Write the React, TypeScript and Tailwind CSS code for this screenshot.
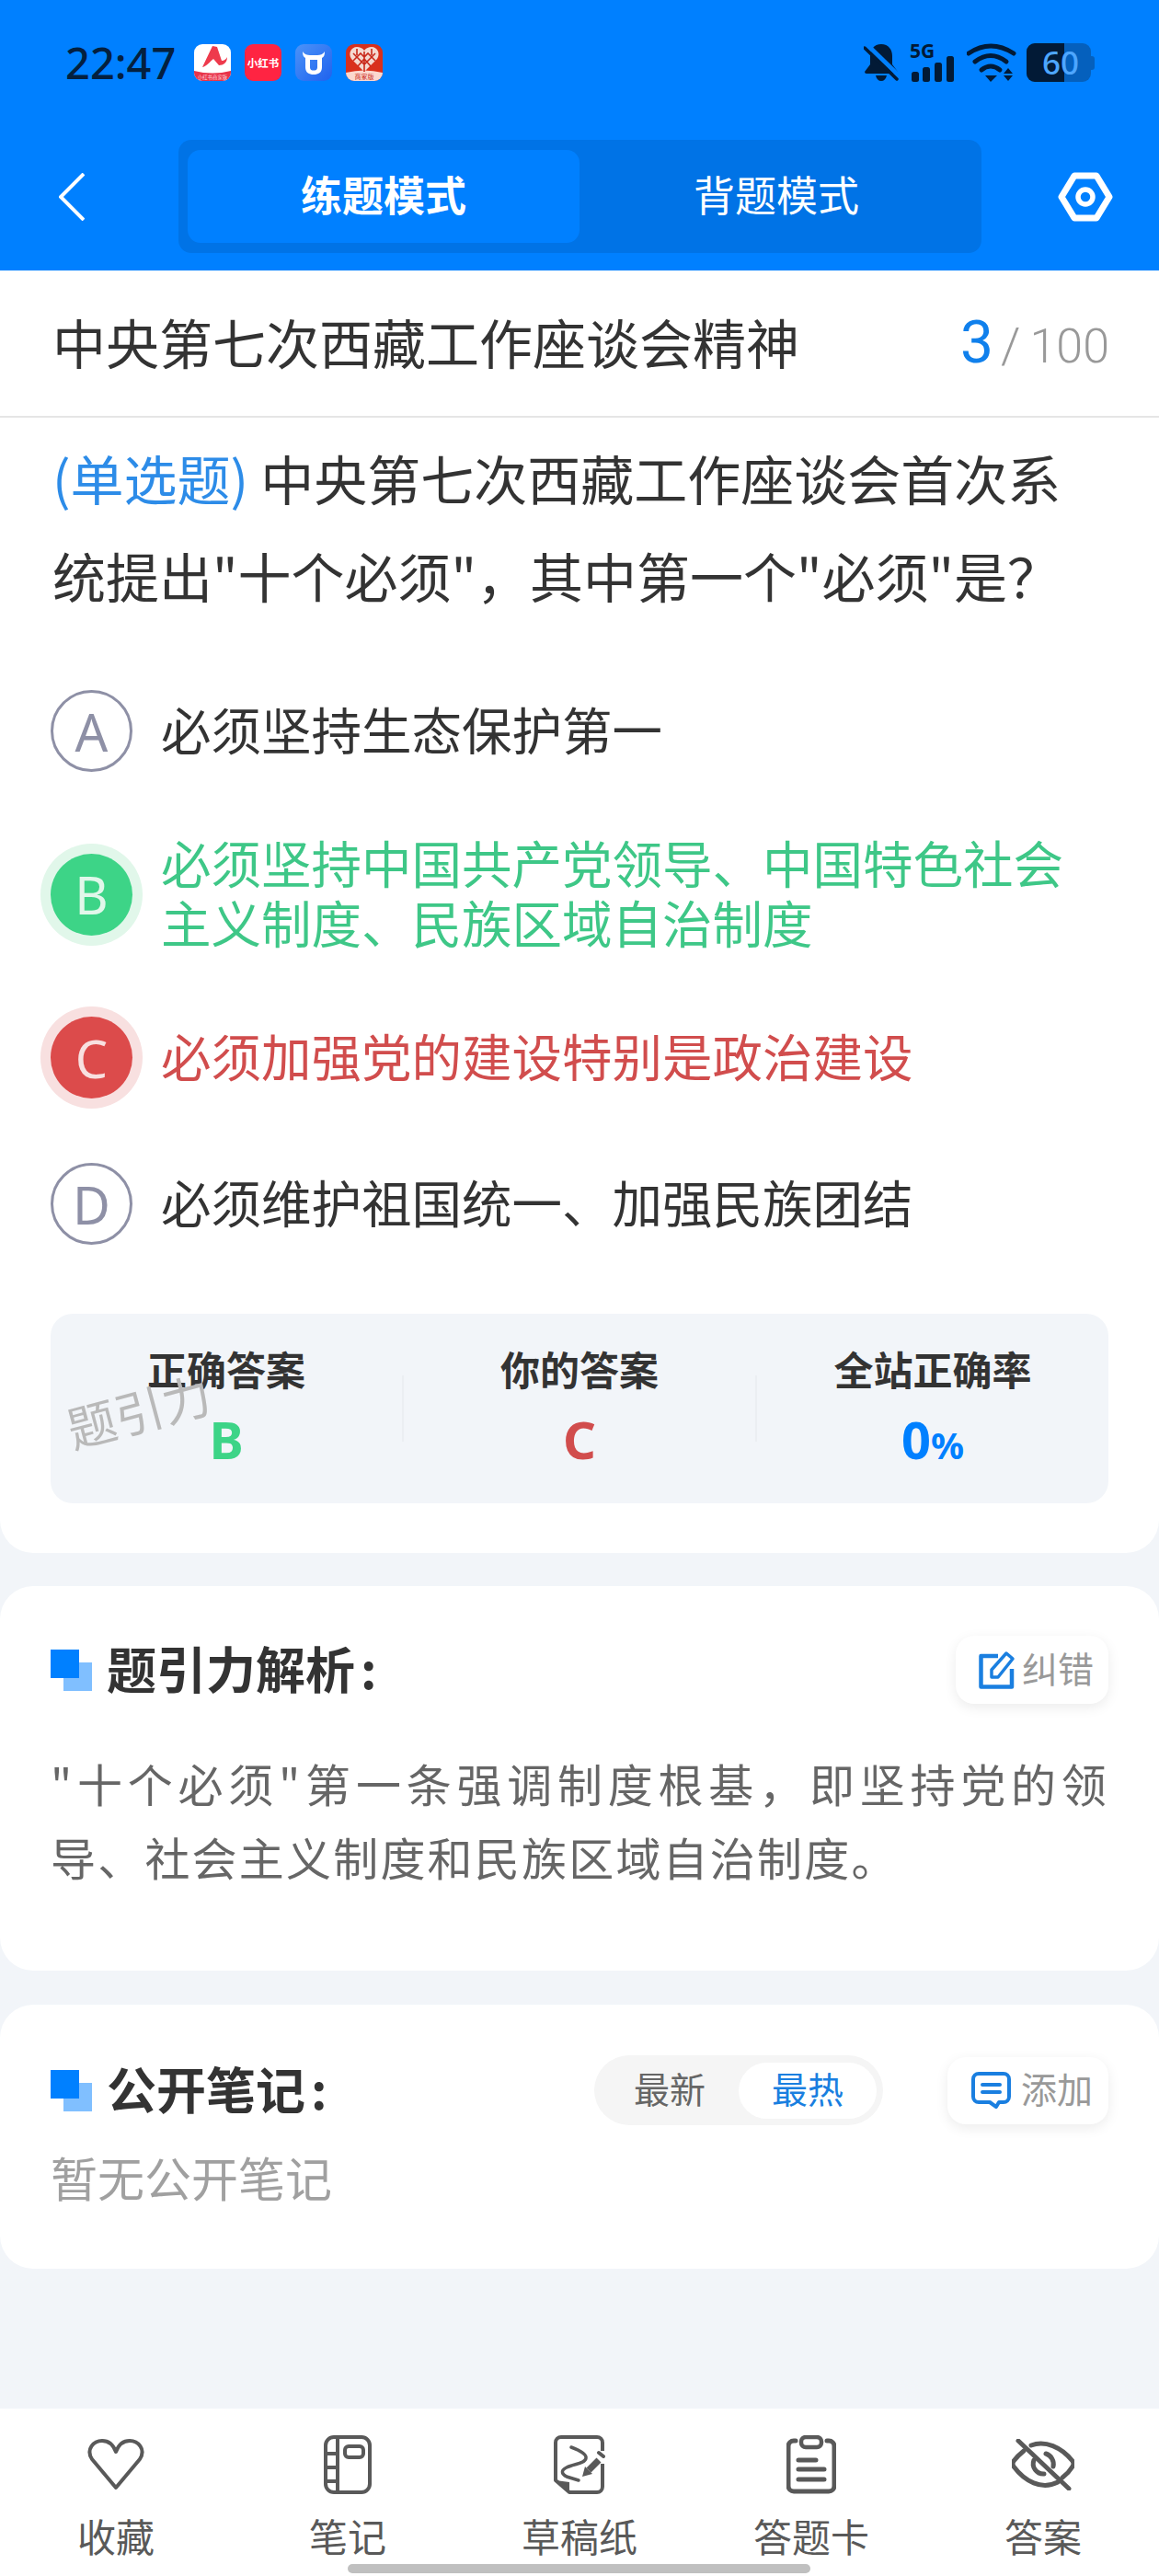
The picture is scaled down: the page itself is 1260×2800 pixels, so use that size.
import React from "react";

const Dual = () => (
  <div className="relative w-[45px] h-[45px] shrink-0">
    <div className="absolute left-[14px] top-[14px] w-[31px] h-[31px] bg-[#80bfff]" />
    <div className="absolute left-0 top-0 w-[31px] h-[31px] bg-[#0080ff]" />
  </div>
);

const AppIcons = () => (
  <div className="flex gap-[15px] ml-[20px]">
    <svg width="40" height="40" viewBox="0 0 40 40">
      <defs>
        <clipPath id="c1"><rect width="40" height="40" rx="9" /></clipPath>
      </defs>
      <g clipPath="url(#c1)">
        <rect width="40" height="40" fill="#ffffff" />
        <path d="M0 29 Q20 34 40 29 V40 H0 Z" fill="#e8344a" />
        <path d="M20 2 L25 3 L30 18 C33 18 35 16 36 14 C36 20 32 23 27 23 L21 16 C17 19 14 24 9 25 Z" fill="#ee3a4c" />
        <text x="20" y="37.5" textAnchor="middle" fontSize="5.4" fill="#ffd5da" fontFamily="Noto Sans CJK SC">小红书商家版</text>
      </g>
    </svg>
    <svg width="40" height="40" viewBox="0 0 40 40">
      <rect width="40" height="40" rx="9" fill="#ff2442" />
      <text x="20" y="24.5" textAnchor="middle" fontSize="11.5" fontWeight="700" fill="#ffffff" fontFamily="Noto Sans CJK SC">小红书</text>
    </svg>
    <svg width="40" height="40" viewBox="0 0 40 40">
      <defs>
        <linearGradient id="g3" x1="0" y1="0" x2="1" y2="1">
          <stop offset="0" stopColor="#4b93f8" />
          <stop offset="1" stopColor="#1f62ee" />
        </linearGradient>
      </defs>
      <rect width="40" height="40" rx="9" fill="url(#g3)" />
      <path d="M8 8 C8 12 9 14 11 15 V25 C11 31 15 33 20 33 C25 33 29 31 29 25 V15 C31 14 32 12 32 8 C30 11 27 12 24 12 H16 C13 12 10 11 8 8 Z M16 17 H24 V25 C24 28 22 28.500 20 28.500 C18 28.500 16 28 16 25 Z" fill="#ffffff" fillRule="evenodd" />
    </svg>
    <svg width="40" height="40" viewBox="0 0 40 40">
      <defs>
        <clipPath id="c4"><rect width="40" height="40" rx="9" /></clipPath>
      </defs>
      <g clipPath="url(#c4)">
        <rect width="40" height="40" fill="#d9301c" />
        <path d="M0 31 Q20 26 40 31 V40 H0 Z" fill="#fbd8cf" />
        <path d="M20 30 L6 16 C2 10 6 3 12 3 C15 3 18 4 20 7 C22 4 25 3 28 3 C34 3 38 10 34 16 Z" fill="#f4d9d0" />
        <path d="M20 8 V30 M8 10 L20 22 L32 10 M8 18 L16 10 L20 14 L24 10 L32 18 M13 24 L20 16 L27 24 M12 5 V12 M28 5 V12" stroke="#c9281a" strokeWidth="1.600" fill="none" />
        <text x="20" y="38" textAnchor="middle" fontSize="7" fill="#c9281a" fontFamily="Noto Sans CJK SC">商家版</text>
      </g>
    </svg>
  </div>
);

const StatusRight = () => (
  <div className="flex items-start ml-auto mr-[70px]">
    <svg width="38" height="42" viewBox="0 0 38 42">
      <path d="M19 1 C27 1 31 7 31 14 V23 L37 31 Q37 33 35 33 H3 Q1 33 1 31 L7 23 V14 C7 7 11 1 19 1 Z" fill="#021a36" />
      <path d="M13 35 H25 C24 39 22 41 19 41 C16 41 14 39 13 35 Z" fill="#021a36" />
      <path d="M4 2 L39 36" stroke="#0080ff" strokeWidth="5" />
      <path d="M1 5 L36 39" stroke="#021a36" strokeWidth="3.500" strokeLinecap="round" />
    </svg>
    <div className="ml-[12px] w-[50px] h-[42px] relative">
      <span className="absolute left-0 top-0 text-[21px] leading-[16px] font-bold text-[#021a36] font-['Noto_Sans',sans-serif]">5G</span>
      <svg width="50" height="42" viewBox="0 0 50 42">
        <rect x="2" y="31" width="8" height="11" rx="2.500" fill="#021a36" />
        <rect x="14" y="26" width="8" height="16" rx="2.500" fill="#021a36" />
        <rect x="27" y="21" width="8" height="21" rx="2.500" fill="#021a36" />
        <rect x="40" y="14" width="8" height="28" rx="2.500" fill="#021a36" />
      </svg>
    </div>
    <svg width="54" height="42" viewBox="0 0 54 42" className="ml-[12px]">
      <path d="M2 11 Q26 -5 51 11" stroke="#021a36" strokeWidth="5" fill="none" strokeLinecap="round" />
      <path d="M9 20 Q26 7 43 20" stroke="#021a36" strokeWidth="5" fill="none" strokeLinecap="round" />
      <path d="M16 29 Q26 21 36 29" stroke="#021a36" strokeWidth="5" fill="none" strokeLinecap="round" />
      <path d="M20 35 H33 L26 42 Z" fill="#021a36" />
      <path d="M45 27 L50 33 H40 Z M40 35 H50 L45 41 Z" fill="#021a36" />
    </svg>
    <div className="flex items-center ml-[11px]">
      <div className="relative w-[70px] h-[42px] rounded-[9px] bg-[#0560bd] flex">
        <div className="w-[41px] h-full rounded-l-[9px] bg-[#021a36]" />
        <span className="absolute inset-0 flex items-center justify-center pl-[4px] text-[35px] leading-[42px] font-medium text-[#4da6ff] font-['Noto_Sans',sans-serif]">60</span>
      </div>
      <div className="w-[4px] h-[15px] bg-[#0560bd] rounded-r-[3px]" />
    </div>
  </div>
);

const Opt = ({ l, c, ring, text, children }: { l: string; c: string; ring: string; text: string; children: React.ReactNode }) => (
  <div className="flex items-center pl-[55px] pr-[55px]">
    <div className={`w-[89px] h-[89px] shrink-0 rounded-full flex items-center justify-center text-[56px] leading-none font-['Noto_Sans',sans-serif] font-normal ${c} ${ring}`}>{l}</div>
    <div className={`ml-[31px] text-[54.5px] leading-[65px] pb-[6px] ${text}`}>{children}</div>
  </div>
);

const Stat = ({ label, children }: { label: string; children: React.ReactNode }) => (
  <div className="flex-1 flex flex-col items-center pt-[29px]">
    <div className="text-[43px] leading-[60px] font-bold text-[#333333]">{label}</div>
    <div className="mt-[15px] h-[64px] flex items-baseline text-[56px] leading-[64px] font-bold font-['Noto_Sans',sans-serif]">{children}</div>
  </div>
);

const Nav = ({ label, icon }: { label: string; icon: React.ReactNode }) => (
  <div className="flex flex-col items-center pt-[29px]">
    <div className="h-[64px] flex items-center justify-center">{icon}</div>
    <div className="mt-[15px] text-[42px] leading-[60px] text-[#595959]">{label}</div>
  </div>
);

export default function App() {
  return (
    <div className="relative w-[1260px] h-[2800px] flex flex-col overflow-hidden bg-[#f2f5f9] font-['Noto_Sans_CJK_SC','Noto_Sans',sans-serif]">
      <header className="h-[294px] shrink-0 bg-[#0080ff] pt-[47px]">
        <div className="h-[42px] flex items-center pl-[71px]">
          <span className="text-[47px] leading-[42px] font-medium text-[#04203f] font-['Noto_Sans',sans-serif]">22:47</span>
          <AppIcons />
          <StatusRight />
        </div>
        <div className="mt-[63px] flex items-center pl-[64px]">
          <svg width="28" height="52" viewBox="0 0 28 52" fill="none">
            <path d="M27 1 L2 26 L27 51" stroke="#ffffff" strokeWidth="4" />
          </svg>
          <div className="ml-[102px] w-[873px] h-[123px] bg-[#0073e6] rounded-[14px] flex py-[11px] pl-[10px] pr-[9px]">
            <div className="w-[426px] pb-[5px] bg-[#0080ff] rounded-[14px] flex items-center justify-center text-[45px] font-bold text-white">练题模式</div>
            <div className="flex-1 pb-[5px] flex items-center justify-center text-[45px] text-white">背题模式</div>
          </div>
          <svg width="60" height="54" viewBox="0 0 60 54" fill="none" className="ml-[83px]">
            <path d="M4 27 L18 4 H42 L56 27 L42 50 H18 Z" stroke="#ffffff" strokeWidth="7" strokeLinejoin="round" />
            <circle cx="30" cy="27" r="8" stroke="#ffffff" strokeWidth="5.500" />
          </svg>
        </div>
      </header>

      <section className="bg-white rounded-b-[36px] h-[1394px] shrink-0">
        <div className="h-[160px] flex items-center justify-between pl-[57px] pr-[54px] pb-[4px] border-b-2 border-[#e5e5e5]">
          <div className="text-[58px] text-[#333333]">中央第七次西藏工作座谈会精神</div>
          <div className="flex items-baseline font-['Roboto',sans-serif] pt-[4px]">
            <span className="text-[64px] text-[#1080ec]">3</span>
            <span className="ml-[8px] text-[54px] font-light text-[#999999]">/</span>
            <span className="ml-[10px] text-[52px] font-light text-[#999999]">100</span>
          </div>
        </div>
        <div className="pt-[12px] pb-[2px] pl-[57px] pr-[52px] text-[58px] leading-[106px] text-[#333333]">
          <span className="text-[#2d8ce8]">(单选题)</span> 中央第七次西藏工作座谈会首次系统提出"十个必须"，其中第一个"必须"是？
        </div>
        <div className="mt-[70px] flex flex-col gap-[65px]">
          <Opt l="A" c="text-[#8e90a6]" ring="border-[3px] border-[#8e90a6]" text="text-[#333333]">必须坚持生态保护第一</Opt>
          <Opt l="B" c="bg-[#3dd487] text-[#e1f7ea]" ring="ring-[11px] ring-[#e1f7ea]" text="text-[#3ec787]">必须坚持中国共产党领导、中国特色社会主义制度、民族区域自治制度</Opt>
          <Opt l="C" c="bg-[#dc4b4b] text-[#f8e0e0]" ring="ring-[11px] ring-[#f8e0e0]" text="text-[#d14d4d]">必须加强党的建设特别是政治建设</Opt>
          <div className="mt-[5px]">
            <Opt l="D" c="text-[#8e90a6]" ring="border-[3px] border-[#8e90a6]" text="text-[#333333]">必须维护祖国统一、加强民族团结</Opt>
          </div>
        </div>
        <div className="relative mt-[75px] mx-[55px] h-[206px] rounded-[24px] bg-[#f2f5f9] flex items-start">
          <Stat label="正确答案"><span className="text-[#3dd487]">B</span></Stat>
          <div className="w-[2px] h-[72px] self-center bg-[#ebeef2]" />
          <Stat label="你的答案"><span className="text-[#d14d4d]">C</span></Stat>
          <div className="w-[2px] h-[72px] self-center bg-[#ebeef2]" />
          <Stat label="全站正确率"><span className="text-[#0080ff]">0</span><span className="text-[40px] text-[#0080ff]">%</span></Stat>
          <div className="absolute left-[16px] top-[78px] text-[53px] leading-none text-[#b9b9b9] -rotate-[15deg]">题引力</div>
        </div>
      </section>

      <section className="mt-[36px] bg-white rounded-[36px] px-[55px] pt-[54px] pb-[84px]">
        <div className="h-[74px] flex items-center">
          <Dual />
          <div className="ml-[16px] pb-[5px] text-[54px] font-bold text-[#333333]">题引力解析<span className="ml-[6px]">:</span></div>
          <div className="ml-auto w-[166px] h-[74px] rounded-[20px] bg-white shadow-[0_4px_14px_rgba(0,0,0,0.08)] flex items-center pl-[25px]">
            <svg width="40" height="42" viewBox="0 0 40 42" fill="none" stroke="#1a7fe0">
              <path d="M21 6 H2.500 V39.500 H36 V20" strokeWidth="4.500" strokeLinejoin="round" />
              <path d="M14 29 V21 L30 3 L37 9 L21 29 Z" strokeWidth="3.500" strokeLinejoin="round" />
            </svg>
            <span className="ml-[7px] pb-[5px] text-[39px] text-[#999999]">纠错</span>
          </div>
        </div>
        <div className="mt-[46px] text-[49px] leading-[80px] tracking-[2.2px] text-[#666666] text-justify">"十个必须"第一条强调制度根基，即坚持党的领导、社会主义制度和民族区域自治制度。</div>
      </section>

      <section className="mt-[37px] bg-white rounded-[36px] px-[55px] pt-[56px] pb-[60px]">
        <div className="h-[74px] flex items-center">
          <Dual />
          <div className="ml-[16px] pb-[5px] text-[54px] font-bold text-[#333333]">公开笔记<span className="ml-[6px]">:</span></div>
          <div className="ml-auto w-[314px] h-[76px] rounded-full bg-[#f5f5f5] flex items-center pl-[43px] pr-[7px]">
            <span className="pb-[5px] text-[39px] text-[#666666]">最新</span>
            <div className="ml-auto w-[150px] h-[61px] pb-[5px] rounded-full bg-white flex items-center justify-center text-[39px] text-[#1a7fe0]">最热</div>
          </div>
          <div className="ml-[70px] w-[175px] h-[73px] rounded-[20px] bg-white shadow-[0_4px_14px_rgba(0,0,0,0.08)] flex items-center pl-[26px]">
            <svg width="43" height="40" viewBox="0 0 43 40" fill="none" stroke="#1a7fe0" strokeWidth="4">
              <path d="M8 2 H35 a6 6 0 0 1 6 6 V27 a6 6 0 0 1 -6 6 H30 L27 38 L20 33 H8 a6 6 0 0 1 -6 -6 V8 a6 6 0 0 1 6 -6 Z" strokeLinejoin="round" />
              <path d="M12 14 H31 M12 22 H31" strokeLinecap="round" />
            </svg>
            <span className="ml-[11px] pb-[5px] text-[39px] text-[#999999]">添加</span>
          </div>
        </div>
        <div className="mt-[17px] text-[51px] leading-[80px] text-[#a0a0a0]">暂无公开笔记</div>
      </section>

      <nav className="mt-auto h-[182px] shrink-0 bg-white grid grid-cols-5">
        <Nav label="收藏" icon={
          <svg width="64" height="56" viewBox="0 0 64 56" fill="none" stroke="#595959" strokeWidth="4">
            <path d="M32 53 L6 22 C-1 11 8 2 17 2 C24 2 29 6 32 14 C35 6 40 2 47 2 C56 2 65 11 58 22 Z" strokeLinejoin="round" />
          </svg>
        } />
        <Nav label="笔记" icon={
          <svg width="52" height="64" viewBox="0 0 52 64" fill="none" stroke="#595959" strokeWidth="4">
            <rect x="2" y="2" width="48" height="60" rx="9" />
            <path d="M15 2 V62 M2 20 H15 M2 35 H15 M2 50 H15" />
            <rect x="23" y="12" width="20" height="12" rx="4" />
          </svg>
        } />
        <Nav label="草稿纸" icon={
          <svg width="56" height="64" viewBox="0 0 56 64" fill="none" stroke="#595959" strokeWidth="4">
            <path d="M53 17 V8 a6 6 0 0 0 -6 -6 H8 a6 6 0 0 0 -6 6 V49 L17 62 H47 a6 6 0 0 0 6 -6 V31" strokeLinejoin="round" />
            <path d="M2 49 L17 51 V62 Z" fill="#595959" stroke="none" />
            <path d="M19 13 C27 16 36 20 35 25 C34 31 22 31 14 35 C6 39 10 43 14 45 L27 49" strokeWidth="3.500" strokeLinecap="round" />
            <path d="M38 38 L49 27" strokeWidth="7" />
            <path d="M31 45 L34 34 L42 42 Z" fill="#595959" stroke="none" />
            <path d="M49 19 L54 23" strokeWidth="4" strokeLinecap="round" />
          </svg>
        } />
        <Nav label="答题卡" icon={
          <svg width="54" height="64" viewBox="0 0 54 64" fill="none" stroke="#595959" strokeWidth="5" strokeLinecap="round">
            <path d="M10 6 H8 a6 6 0 0 0 -6 6 V55 a6 6 0 0 0 6 6 H46 a6 6 0 0 0 6 -6 V12 a6 6 0 0 0 -6 -6 H44" />
            <rect x="16" y="2" width="22" height="11" rx="5" strokeWidth="4.500" />
            <path d="M13 27 H32 M13 37 H41 M13 48 H41" />
          </svg>
        } />
        <Nav label="答案" icon={
          <svg width="68" height="56" viewBox="0 0 68 56" fill="none" stroke="#595959" strokeWidth="5" strokeLinecap="round">
            <path d="M21 7 C36 1 54 9 66 24 Q68 27 66 30 C63 35 59 39 55 42" />
            <path d="M13 13 C8 17 5 20 2 24 Q0 27 2 30 C14 46 32 56 50 47" />
            <path d="M37 16 A12 12 0 0 1 45 30 M24 23 A11 11 0 0 0 35 38" />
            <path d="M7 2 L62 54" />
          </svg>
        } />
      </nav>

      <div className="absolute left-[378px] top-[2787px] w-[503px] h-[10px] rounded-full bg-[#c0c0c0]" />
    </div>
  );
}
